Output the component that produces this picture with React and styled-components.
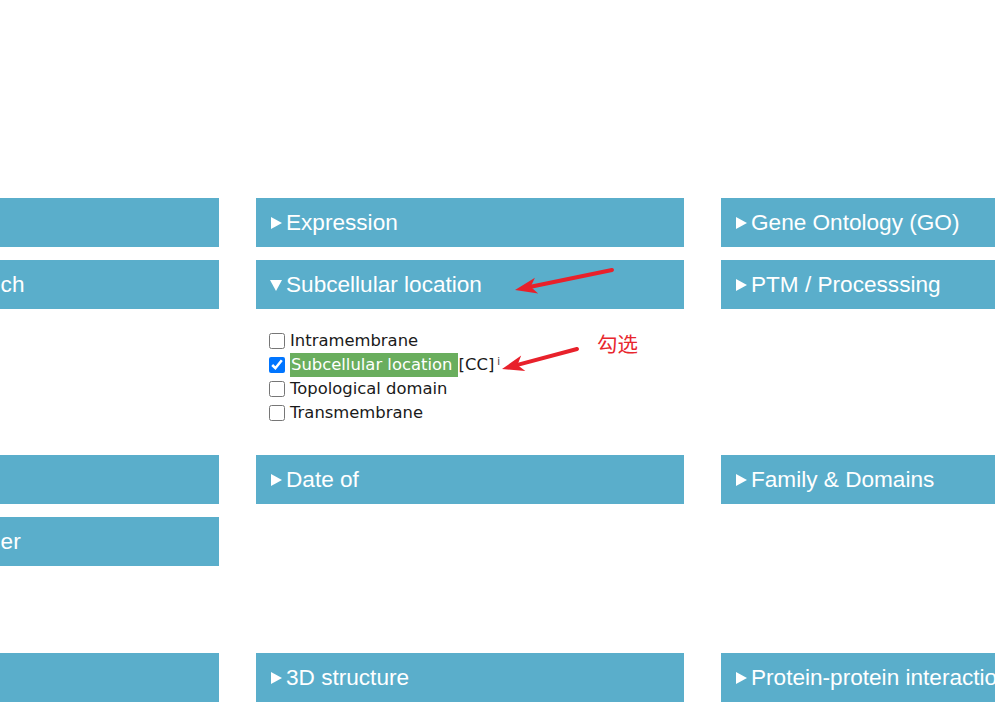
import React from "react";
import styled, { createGlobalStyle } from "styled-components";

const GlobalStyle = createGlobalStyle`
  html, body { margin: 0; padding: 0; background: #ffffff; overflow: hidden; }
  #root { width: 995px; height: 705px; }
`;

const Page = styled.div`
  position: relative;
  width: 995px;
  height: 705px;
  overflow: hidden;
  padding-top: 198px;
  box-sizing: border-box;
`;

const Board = styled.div`
  margin-left: -209px;
  display: flex;
  flex-direction: column;
`;

const Row = styled.div`
  display: grid;
  grid-template-columns: repeat(3, 428px);
  column-gap: 37px;
  align-items: start;
  margin-bottom: ${(p) => p.$after}px;
`;

const Cell = styled.div`
  display: flex;
  flex-direction: column;
  gap: 13px;
  min-width: 0;
`;

const Header = styled.div`
  height: 49px;
  background: #5aaecb;
  color: #ffffff;
  font-family: "Liberation Sans", Arial, sans-serif;
  font-size: 22.6px;
  line-height: 49px;
  padding-left: 14px;
  display: flex;
  align-items: center;
  gap: 4px;
  white-space: nowrap;
  overflow: hidden;
`;

const Caret = styled.svg`
  width: 12px;
  height: 12px;
  flex: none;
  fill: #ffffff;
`;

const List = styled.ul`
  list-style: none;
  margin: 0;
  padding: 7px 0 0 13px;
  font-family: "DejaVu Sans", Verdana, sans-serif;
  font-size: 16.4px;
  color: #1a1a1a;
`;

const Item = styled.li`
  height: 24px;
  line-height: 24px;
  display: flex;
  align-items: center;
  white-space: nowrap;
`;

const Box = styled.input`
  width: 16px;
  height: 16px;
  margin: 0 5px 0 0;
  flex: none;
  accent-color: #0075ff;
`;

const Marked = styled.span`
  background: #6aae5e;
  color: #ffffff;
  padding-left: 1px;
  line-height: 24px;
  white-space: pre;
`;

const Tag = styled.span`
  color: #1a1a1a;
  padding-left: 1px;
`;

const Info = styled.sup`
  font-size: 10px;
  line-height: 0;
  margin-left: 3px;
  position: relative;
  top: -3px;
  color: #333333;
`;

const Overlay = styled.svg`
  position: absolute;
  left: 0;
  top: 0;
  width: 995px;
  height: 705px;
  pointer-events: none;
`;

const Note = styled.div`
  position: absolute;
  left: 597px;
  top: 329px;
  font-family: "Noto Sans CJK SC", sans-serif;
  font-size: 20.5px;
  line-height: 28px;
  color: #e8262d;
`;

function Tri({ open }) {
  return (
    <Caret viewBox="0 0 12 12">
      {open ? <polygon points="0,1 12,1 6,12" /> : <polygon points="1,0 12,6 1,12" />}
    </Caret>
  );
}

function Head({ title, open }) {
  return (
    <Header>
      <Tri open={open} />
      <span>{title}</span>
    </Header>
  );
}

function Arrow({ x1, y1, x2, y2 }) {
  const ang = Math.atan2(y2 - y1, x2 - x1);
  const len = 22;
  const half = 8;
  const bx = x2 - Math.cos(ang) * len;
  const by = y2 - Math.sin(ang) * len;
  const px = -Math.sin(ang) * half;
  const py = Math.cos(ang) * half;
  const nx = x2 - Math.cos(ang) * (len - 6);
  const ny = y2 - Math.sin(ang) * (len - 6);
  return (
    <g>
      <line x1={x1} y1={y1} x2={nx} y2={ny} stroke="#e8212b" strokeWidth="4" strokeLinecap="round" />
      <polygon
        points={`${x2},${y2} ${bx + px},${by + py} ${nx},${ny} ${bx - px},${by - py}`}
        fill="#e8212b"
      />
    </g>
  );
}

export default function App() {
  return (
    <>
      <GlobalStyle />
      <Page>
        <Board>
          <Row $after={30}>
            <Cell>
              <Head title="Function" />
              <Head title="Pathology & Biotech" />
            </Cell>
            <Cell>
              <Head title="Expression" />
              <Head title="Subcellular location" open />
              <List>
                <Item>
                  <Box type="checkbox" readOnly />
                  Intramembrane
                </Item>
                <Item>
                  <Box type="checkbox" defaultChecked />
                  <Marked>Subcellular location </Marked>
                  <Tag>[CC]</Tag>
                  <Info>i</Info>
                </Item>
                <Item>
                  <Box type="checkbox" readOnly />
                  Topological domain
                </Item>
                <Item>
                  <Box type="checkbox" readOnly />
                  Transmembrane
                </Item>
              </List>
            </Cell>
            <Cell>
              <Head title="Gene Ontology (GO)" />
              <Head title="PTM / Processsing" />
            </Cell>
          </Row>
          <Row $after={87}>
            <Cell>
              <Head title="Miscellaneous" />
              <Head title="Taxonomic identifier" />
            </Cell>
            <Cell>
              <Head title="Date of" />
            </Cell>
            <Cell>
              <Head title="Family & Domains" />
            </Cell>
          </Row>
          <Row $after={0}>
            <Cell>
              <Head title="Interaction" />
            </Cell>
            <Cell>
              <Head title="3D structure" />
            </Cell>
            <Cell>
              <Head title="Protein-protein interaction" />
            </Cell>
          </Row>
        </Board>
        <Overlay viewBox="0 0 995 705">
          <Arrow x1={612} y1={270} x2={515} y2={290} />
          <Arrow x1={577} y1={349} x2={502} y2={369} />
        </Overlay>
        <Note>勾选</Note>
      </Page>
    </>
  );
}
